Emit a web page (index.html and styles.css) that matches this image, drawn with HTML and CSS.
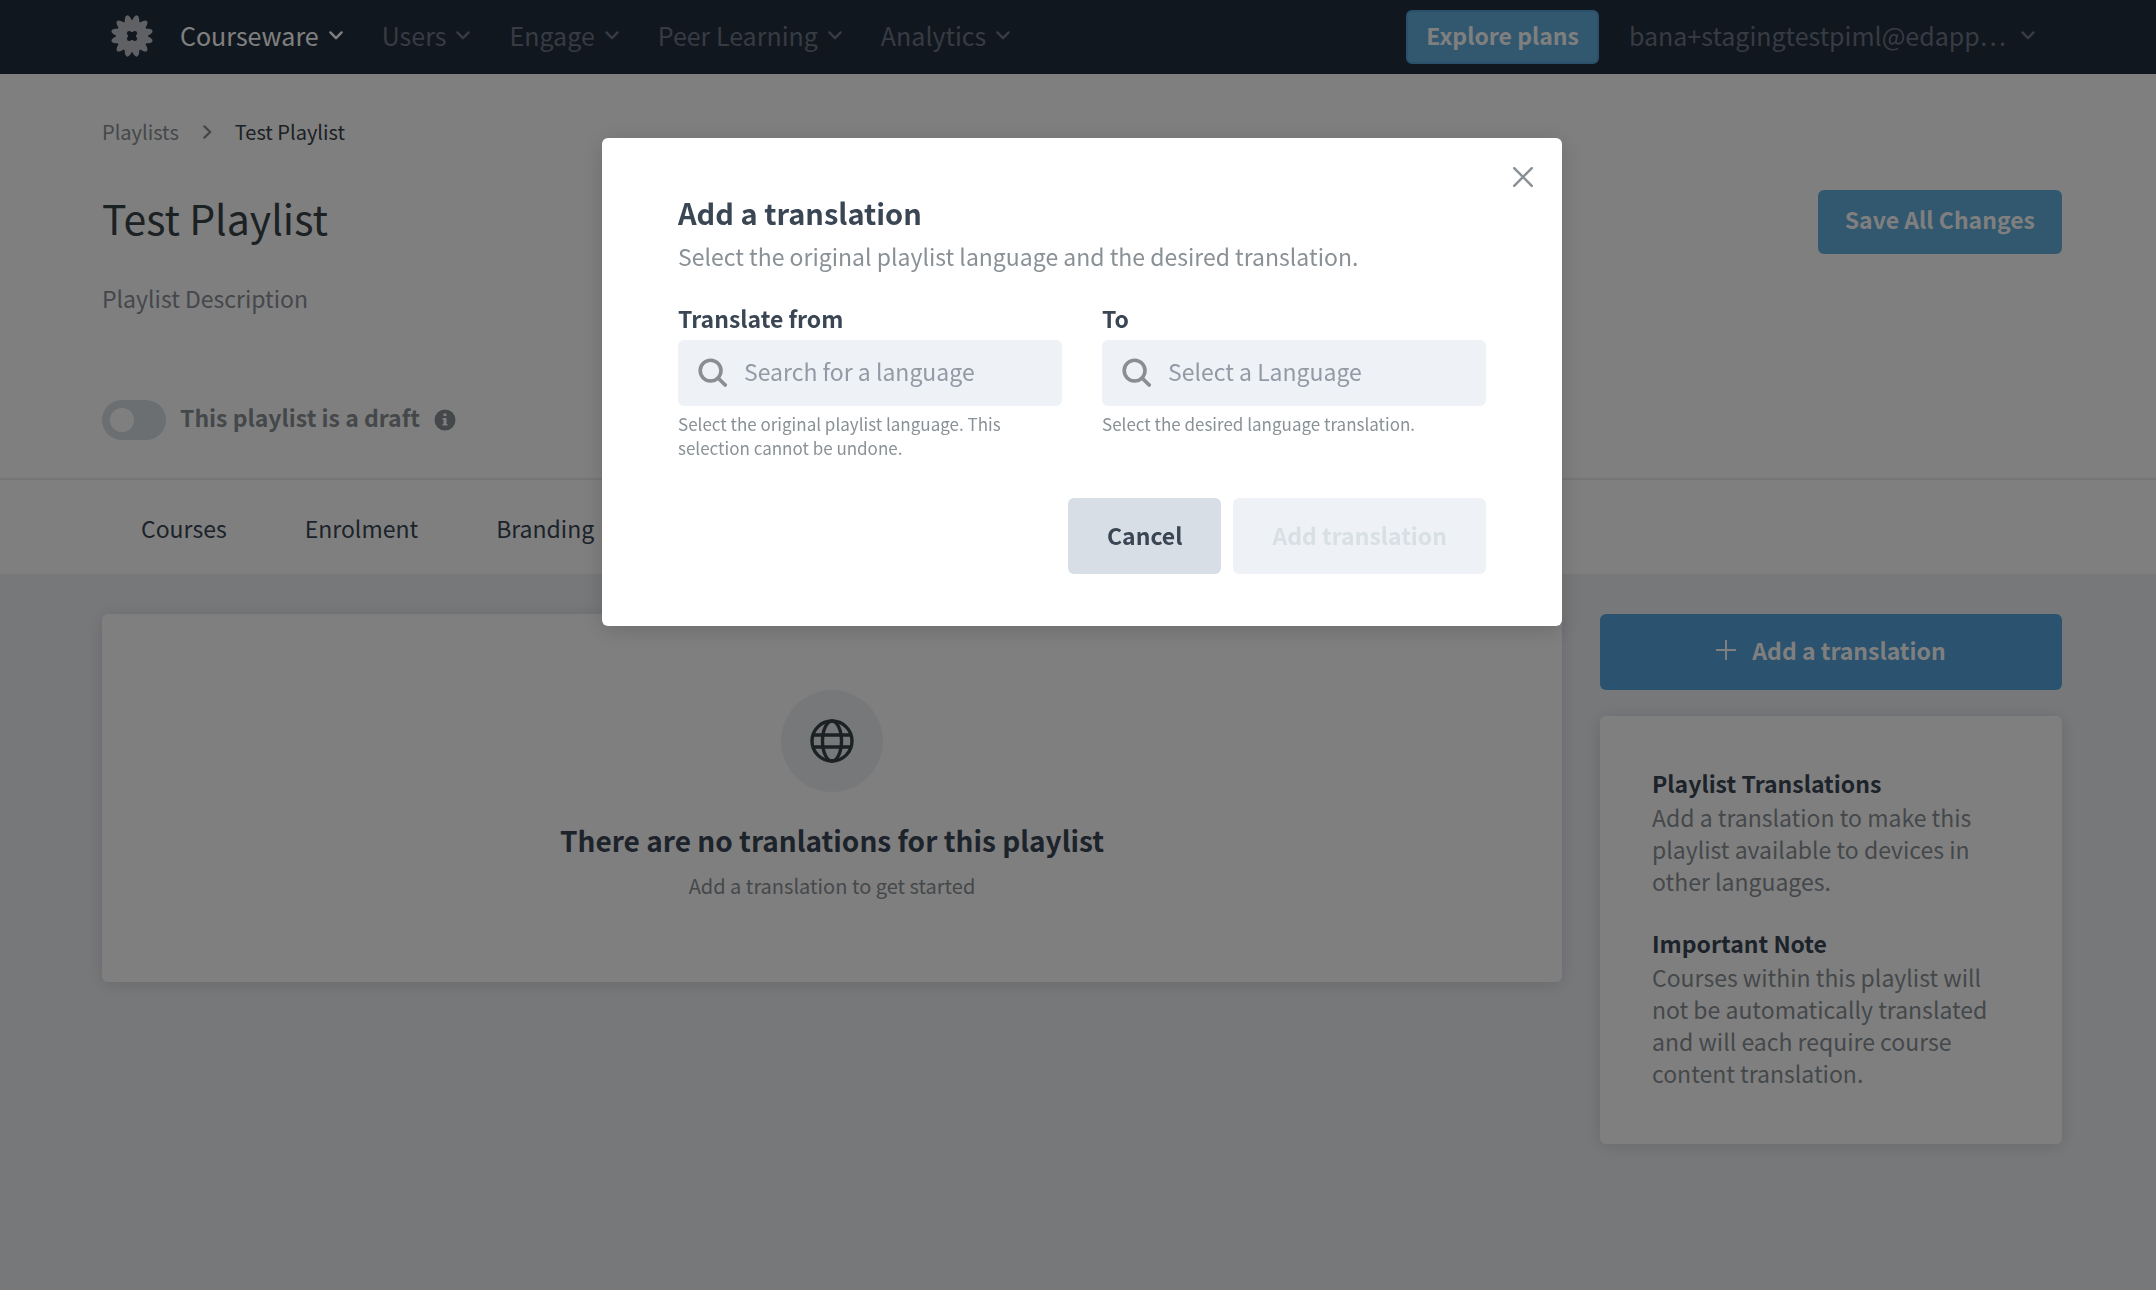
FILE: index.html
```html
<!DOCTYPE html>
<html lang="en">
<head>
    <meta charset="UTF-8">
    <meta name="viewport" content="width=device-width, initial-scale=1.0">
    <title>Test Playlist</title>
    <link rel="stylesheet" href="styles.css">
</head>
<body>
    <!-- Shared icons -->
    <svg class="icon-defs" aria-hidden="true">
        <symbol id="chevron-down" viewBox="0 0 16 16">
            <path d="M2.4 5.4 8 11.2l5.6-5.8" fill="none" stroke="currentColor" stroke-width="2.4" stroke-linecap="round" stroke-linejoin="round"/>
        </symbol>
        <symbol id="search" viewBox="0 0 30 30">
            <circle cx="12.6" cy="12.6" r="10.4" fill="none" stroke="currentColor" stroke-width="3.6"/>
            <path d="M20 20l7.2 7" stroke="currentColor" stroke-width="3.8" stroke-linecap="round"/>
        </symbol>
        <symbol id="petal" viewBox="0 0 44 44">
            <ellipse cx="22" cy="10.6" rx="4" ry="9.8"/>
        </symbol>
    </svg>

    <!-- Header Section -->
    <header class="site-header">
        <a href="#" class="logo" aria-label="Home">
            <svg viewBox="0 0 44 44" width="44" height="44">
                <g fill="#bec2cb">
                    <circle cx="22" cy="22" r="16"/>
                    <use href="#petal" transform="rotate(14 22 22)"/>
                    <use href="#petal" transform="rotate(45 22 22)"/>
                    <use href="#petal" transform="rotate(76 22 22)"/>
                    <use href="#petal" transform="rotate(104 22 22)"/>
                    <use href="#petal" transform="rotate(135 22 22)"/>
                    <use href="#petal" transform="rotate(166 22 22)"/>
                    <use href="#petal" transform="rotate(194 22 22)"/>
                    <use href="#petal" transform="rotate(225 22 22)"/>
                    <use href="#petal" transform="rotate(256 22 22)"/>
                    <use href="#petal" transform="rotate(284 22 22)"/>
                    <use href="#petal" transform="rotate(315 22 22)"/>
                    <use href="#petal" transform="rotate(346 22 22)"/>
                </g>
                <g fill="#222f3e">
                    <rect x="18" y="18" width="8" height="8"/>
                    <circle cx="19.2" cy="19.2" r="2.3"/>
                    <circle cx="24.8" cy="19.2" r="2.3"/>
                    <circle cx="19.2" cy="24.8" r="2.3"/>
                    <circle cx="24.8" cy="24.8" r="2.3"/>
                </g>
            </svg>
        </a>
        <nav class="main-nav">
            <a href="#" class="active">Courseware <svg class="chevron"><use href="#chevron-down"/></svg></a>
            <a href="#">Users <svg class="chevron"><use href="#chevron-down"/></svg></a>
            <a href="#">Engage <svg class="chevron"><use href="#chevron-down"/></svg></a>
            <a href="#">Peer Learning <svg class="chevron"><use href="#chevron-down"/></svg></a>
            <a href="#">Analytics <svg class="chevron"><use href="#chevron-down"/></svg></a>
        </nav>
        <button type="button" class="btn btn-plans">Explore plans</button>
        <button type="button" class="account">bana+stagingtestpiml@edapp… <svg class="chevron"><use href="#chevron-down"/></svg></button>
    </header>

    <!-- Playlist details -->
    <section class="playlist-head">
        <nav class="breadcrumb" aria-label="Breadcrumb">
            <a href="#">Playlists</a>
            <svg class="chevron crumb-arrow"><use href="#chevron-down"/></svg>
            <span>Test Playlist</span>
        </nav>
        <div class="title-row">
            <h1>Test Playlist</h1>
            <button type="button" class="btn btn-save">Save All Changes</button>
        </div>
        <p class="description">Playlist Description</p>
        <div class="draft-row">
            <input type="checkbox" class="toggle" id="draft">
            <label for="draft">This playlist is a draft</label>
            <svg class="info" viewBox="0 0 22 22" width="22" height="22">
                <circle cx="11" cy="11" r="10.5" fill="#8a9196"/>
                <path d="M9.5 4.5h3v2.6h-3zM8.5 9h4v6h1v1.6h-5V15h1v-4.4h-1z" fill="#fff"/>
            </svg>
        </div>
    </section>

    <nav class="tabs">
        <a href="#">Courses</a>
        <a href="#">Enrolment</a>
        <a href="#">Branding</a>
    </nav>

    <!-- Translations -->
    <main class="content">
        <section class="card empty">
            <div class="empty-icon">
                <svg viewBox="0 0 44 44" width="44" height="44" fill="none" stroke="#384247" stroke-width="3.4">
                    <circle cx="22" cy="22" r="20"/>
                    <ellipse cx="22" cy="22" rx="9.5" ry="20"/>
                    <path d="M3.5 16h37M3.5 28h37"/>
                </svg>
            </div>
            <h2>There are no tranlations for this playlist</h2>
            <p>Add a translation to get started</p>
        </section>
        <aside class="sidebar">
            <button type="button" class="btn btn-add">
                <svg viewBox="0 0 20 20" width="20" height="20"><path d="M10 0v20M0 10h20" stroke="currentColor" stroke-width="2"/></svg>
                Add a translation
            </button>
            <div class="card notes">
                <h3>Playlist Translations</h3>
                <p>Add a translation to make this playlist available to devices in other languages.</p>
                <h3>Important Note</h3>
                <p>Courses within this playlist will not be automatically translated and will each require course content translation.</p>
            </div>
        </aside>
    </main>

    <!-- Add translation dialog -->
    <div class="overlay">
        <form class="modal" role="dialog" aria-modal="true" aria-labelledby="modal-title">
            <button type="button" class="close" aria-label="Close">
                <svg viewBox="0 0 20 20" width="20" height="20"><path d="M1.2 1.2l17.6 17.6M18.8 1.2L1.2 18.8" stroke="currentColor" stroke-width="2.5" stroke-linecap="round"/></svg>
            </button>
            <h2 id="modal-title">Add a translation</h2>
            <p class="modal-text">Select the original playlist language and the desired translation.</p>
            <div class="fields">
                <div class="field">
                    <label for="from">Translate from</label>
                    <div class="search-box">
                        <svg width="30" height="30"><use href="#search"/></svg>
                        <input type="text" id="from" placeholder="Search for a language">
                    </div>
                    <p class="hint">Select the original playlist language. This selection cannot be undone.</p>
                </div>
                <div class="field">
                    <label for="to">To</label>
                    <div class="search-box">
                        <svg width="30" height="30"><use href="#search"/></svg>
                        <input type="text" id="to" placeholder="Select a Language">
                    </div>
                    <p class="hint">Select the desired language translation.</p>
                </div>
            </div>
            <div class="actions">
                <button type="button" class="btn btn-cancel">Cancel</button>
                <button type="submit" class="btn btn-submit" disabled>Add translation</button>
            </div>
        </form>
    </div>
</body>
</html>
```

FILE: styles.css
```css
/* Reset and Base Styles */
* {
    margin: 0;
    padding: 0;
    box-sizing: border-box;
}

body {
    font-family: 'Noto Sans CJK SC', 'Noto Sans', sans-serif;
    font-size: 23px;
    line-height: 32px;
    background-color: #eff1f5;
    color: #3a4654;
}

a {
    color: inherit;
    text-decoration: none;
}

button,
input {
    font: inherit;
    color: inherit;
    border: none;
    background: none;
}

button {
    cursor: pointer;
}

svg {
    display: block;
    flex-shrink: 0;
}

.icon-defs {
    position: absolute;
    width: 0;
    height: 0;
}

.chevron {
    width: 16px;
    height: 16px;
}

.btn {
    padding-bottom: 2px;
    border-radius: 6px;
    color: #fff;
    font-weight: 700;
    white-space: nowrap;
}

/* Header Styles */
.site-header {
    display: flex;
    align-items: center;
    height: 74px;
    padding: 0 120px 0 110px;
    background-color: #222f3e;
    color: #6e7687;
}

.logo {
    margin-right: 26px;
    padding-bottom: 2px;
}

.main-nav {
    display: flex;
    gap: 38px;
    margin-right: auto;
}

.main-nav a,
.account {
    display: flex;
    align-items: center;
    gap: 9px;
    padding-bottom: 4px;
    font-size: 25px;
    white-space: nowrap;
}

.main-nav .active {
    color: #fff;
}

.account {
    gap: 14px;
}

.btn-plans {
    height: 54px;
    padding: 0 18px 4px;
    margin-right: 30px;
    border: 2px solid #54a0d6;
    background-color: #64b0de;
}

/* Playlist details */
.playlist-head {
    padding: 42px 94px 38px 102px;
    background-color: #fff;
    border-bottom: 2px solid #eaecee;
}

.breadcrumb {
    display: flex;
    align-items: center;
    gap: 20px;
    font-size: 20px;
    color: #8a9196;
}

.breadcrumb span {
    color: #384247;
}

.crumb-arrow {
    transform: rotate(-90deg);
}

.title-row {
    display: flex;
    justify-content: space-between;
    align-items: flex-start;
    margin-top: 42px;
}

.title-row h1 {
    font-size: 41px;
    line-height: 54px;
    font-weight: 400;
    color: #384247;
}

.btn-save {
    height: 64px;
    padding: 0 27px 6px;
    background-color: #64b0de;
}

.description {
    margin-top: 28px;
    color: #8a8f98;
}

.draft-row {
    display: flex;
    align-items: center;
    gap: 14px;
    margin-top: 86px;
}

.draft-row label {
    padding-bottom: 6px;
    font-weight: 700;
    color: #8a9196;
}

.toggle {
    appearance: none;
    width: 64px;
    height: 40px;
    padding: 8px;
    border-radius: 20px;
    background-color: #d7dee4;
}

.toggle::before {
    content: '';
    display: block;
    width: 24px;
    height: 24px;
    border-radius: 50%;
    background-color: #fff;
}

/* Tabs */
.tabs {
    display: flex;
    gap: 78px;
    padding: 32px 94px 30px 141px;
    background-color: #fff;
}

/* Content */
.content {
    display: grid;
    grid-template-columns: 1fr 462px;
    align-items: start;
    gap: 38px;
    padding: 40px 94px 40px 102px;
}

.card {
    background-color: #fff;
    border-radius: 6px;
    box-shadow: 0 2px 16px rgba(34, 47, 62, 0.15);
}

.empty {
    display: flex;
    flex-direction: column;
    align-items: center;
    padding: 76px 40px 80px;
    text-align: center;
}

.empty-icon {
    display: flex;
    align-items: center;
    justify-content: center;
    width: 102px;
    height: 102px;
    border-radius: 50%;
    background-color: #eff1f5;
}

.empty h2 {
    margin-top: 28px;
    font-size: 28px;
    line-height: 40px;
}

.empty p {
    margin-top: 10px;
    font-size: 20px;
    color: #8a9196;
}

.sidebar {
    display: flex;
    flex-direction: column;
    gap: 26px;
}

.btn-add {
    display: flex;
    align-items: center;
    justify-content: center;
    gap: 16px;
    height: 76px;
    padding-bottom: 4px;
    background-color: #56a4dc;
}

.notes {
    padding: 49px 52px 55px;
    color: #8a9196;
}

.notes h3 {
    font-size: 23px;
    line-height: 36px;
    color: #3a4654;
}

.notes p + h3 {
    margin-top: 28px;
}

/* Modal */
.overlay {
    position: fixed;
    inset: 0;
    padding: 138px 94px 0 102px;
    background-color: rgba(0, 0, 0, 0.5);
}

.modal {
    position: relative;
    max-width: 960px;
    margin: 0 auto;
    padding: 54px 76px 52px;
    border-radius: 6px;
    background-color: #fff;
    box-shadow: 0 4px 24px rgba(0, 0, 0, 0.15);
}

.close {
    position: absolute;
    top: 29px;
    right: 29px;
    color: #8a9196;
}

.modal h2 {
    font-size: 29px;
    line-height: 40px;
}

.modal-text {
    margin-top: 8px;
    color: #8a9196;
}

.fields {
    display: grid;
    grid-template-columns: 1fr 1fr;
    gap: 40px;
    margin-top: 30px;
}

.field label {
    display: block;
    font-weight: 700;
}

.search-box {
    display: flex;
    align-items: center;
    gap: 16px;
    height: 66px;
    margin-top: 6px;
    padding: 0 20px;
    border-radius: 6px;
    background-color: #eef1f6;
    color: #8a8e91;
}

.search-box input {
    width: 100%;
    min-width: 0;
    height: 34px;
    padding-bottom: 4px;
    outline: none;
}

.search-box input::placeholder {
    color: #939aa5;
    opacity: 1;
}

.hint {
    margin-top: 6px;
    font-size: 17px;
    line-height: 24px;
    color: #8a9196;
}

.actions {
    display: flex;
    justify-content: flex-end;
    gap: 12px;
    margin-top: 38px;
}

.btn-cancel,
.btn-submit {
    height: 76px;
    padding: 0 39px 2px;
}

.btn-cancel {
    background-color: #d7dee5;
    color: #3a4654;
}

.btn-submit {
    background-color: #eef1f6;
    color: #d9e0e4;
}
```
